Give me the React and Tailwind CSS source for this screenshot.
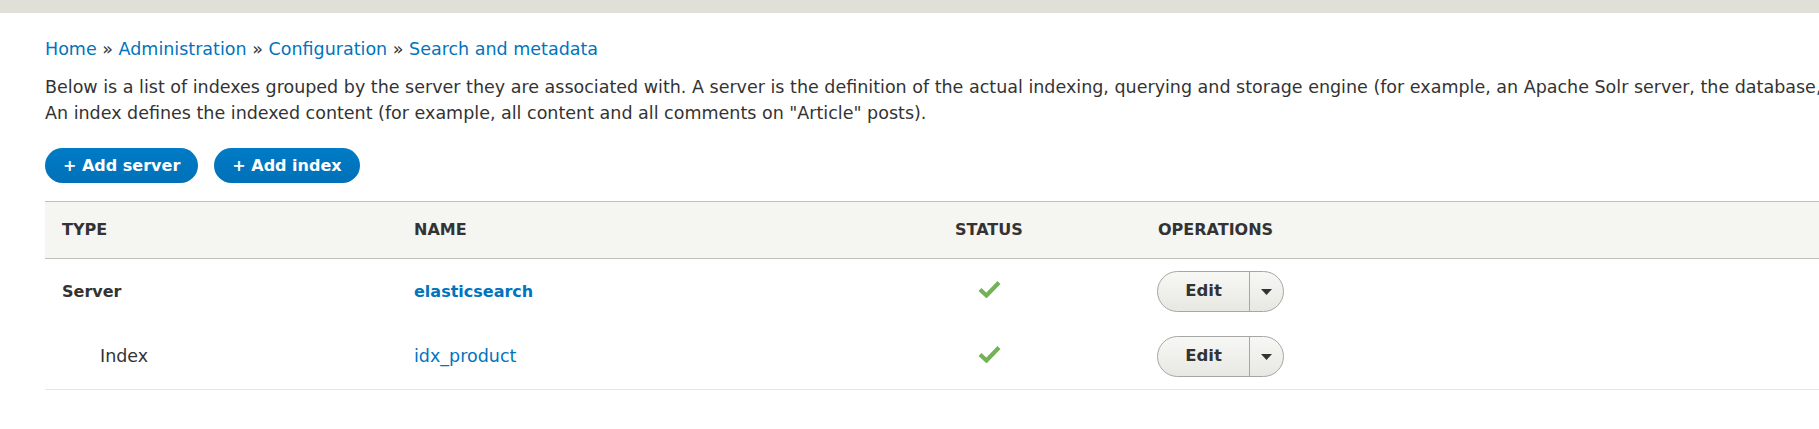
import React from "react";

const Check = () => (
  <svg width="23" height="18" viewBox="0 0 23 18" className="block">
    <path d="M2 9.5 L8.5 15.5 L21 2.5" fill="none" stroke="#73b355" strokeWidth="4.2" />
  </svg>
);

const EditButton = () => (
  <div className="flex h-[41px] w-[127px] rounded-full border border-[#a6a6a6] bg-gradient-to-b from-[#f7f7f4] to-[#e8e8e3] text-[#333]">
    <div className="flex w-[91px] items-center justify-center text-[16.5px] font-bold">Edit</div>
    <div className="flex flex-1 items-center justify-center border-l border-[#a6a6a6]">
      <svg width="11" height="6" viewBox="0 0 11 6">
        <path d="M0 0 L11 0 L5.5 6 Z" fill="#333" />
      </svg>
    </div>
  </div>
);

const rows = [
  { type: "Server", name: "elasticsearch", bold: true },
  { type: "Index", name: "idx_product", bold: false },
];

export default function App() {
  return (
    <div className="w-full overflow-hidden bg-white text-[17.5px] text-[#333] font-['DejaVu_Sans',sans-serif]">
      <div className="h-[13px] bg-[#e0e0d8]" />
      <div className="pl-[45px]">
        <nav className="mt-[23px] leading-[26px] text-[#0074bd]">
          <a>Home</a> <span className="text-[#333]">»</span> <a>Administration</a>{" "}
          <span className="text-[#333]">»</span> <a>Configuration</a>{" "}
          <span className="text-[#333]">»</span> <a>Search and metadata</a>
        </nav>
        <div className="mt-[12px] leading-[26px]">
          <p className="whitespace-nowrap">
            Below is a list of indexes grouped by the server they are associated with. A server is the definition of the actual indexing, querying and storage engine (for example, an Apache Solr server, the database, …).
          </p>
          <p className="whitespace-nowrap">
            An index defines the indexed content (for example, all content and all comments on "Article" posts).
          </p>
        </div>
        <div className="mt-[22px] flex gap-[16px]">
          <button className="h-[35px] rounded-full bg-gradient-to-b from-[#007bc6] to-[#0071b8] px-[18px] text-[16px] font-bold text-white">
            + Add server
          </button>
          <button className="h-[35px] rounded-full bg-gradient-to-b from-[#007bc6] to-[#0071b8] px-[18px] text-[16px] font-bold text-white">
            + Add index
          </button>
        </div>
        <div className="mt-[18px] w-[2000px]">
          <div className="grid h-[58px] grid-cols-[352px_541px_203px_1fr] items-center border-y border-[#bfbfba] bg-[#f5f5f2] text-[16px] font-bold uppercase">
            <div className="pl-[17px]">Type</div>
            <div className="pl-[17px]">Name</div>
            <div className="pl-[17px]">Status</div>
            <div className="pl-[17px]">Operations</div>
          </div>
          <div className="border-b border-[#e6e6e6]">
            {rows.map((r) => (
              <div key={r.name} className="grid h-[65px] grid-cols-[352px_541px_203px_1fr] items-center">
                <div className={r.bold ? "pl-[17px] text-[16px] font-bold" : "pl-[55px]"}>{r.type}</div>
                <div className={"pl-[17px] text-[#0074bd] " + (r.bold ? "text-[16px] font-bold" : "")}>{r.name}</div>
                <div className="pl-[40px] pb-[6px]">
                  <Check />
                </div>
                <div className="pl-[16px]">
                  <EditButton />
                </div>
              </div>
            ))}
          </div>
        </div>
      </div>
    </div>
  );
}
